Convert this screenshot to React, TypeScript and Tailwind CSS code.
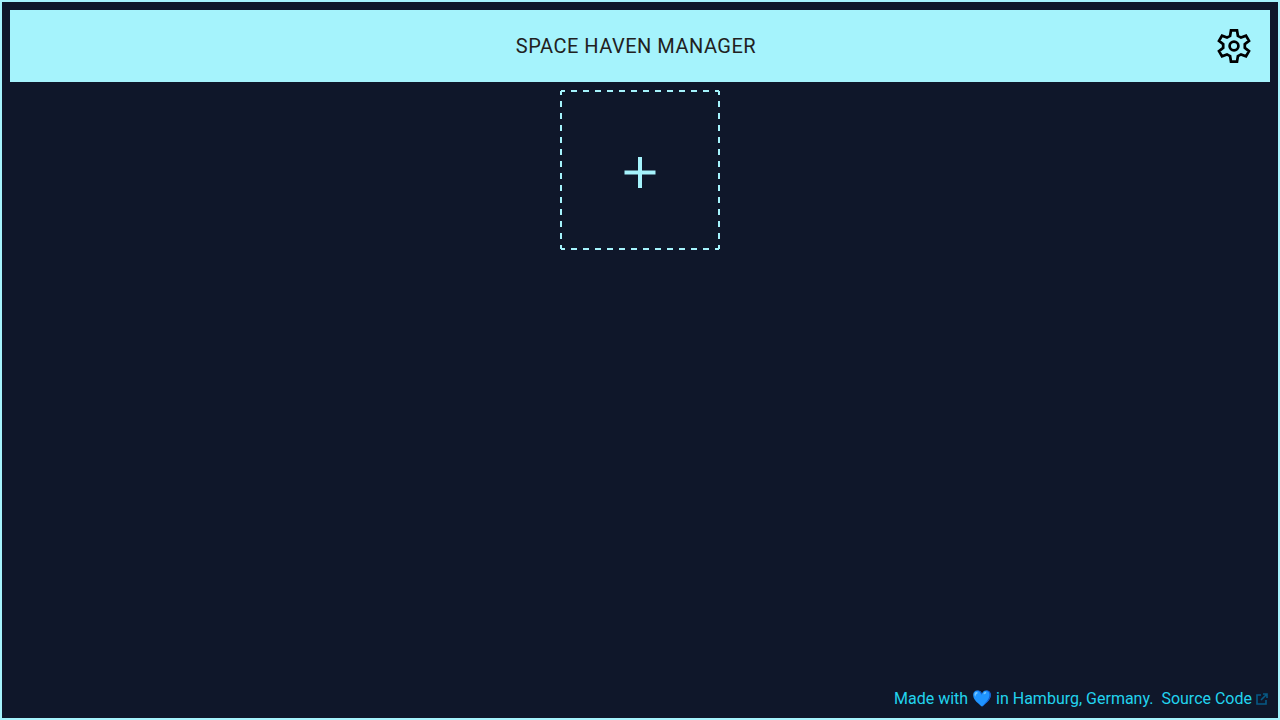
export default function App() {
  return (
    <div className="flex min-h-screen flex-col border-2 border-[#a5f3fc] bg-[#0f172a] p-2 font-[Roboto,sans-serif]">
      <header className="flex items-center bg-[#a5f3fc] p-4">
        <h1 className="flex-1 pl-8 text-center text-xl leading-10 font-normal tracking-wide text-[#212121]">SPACE HAVEN MANAGER</h1>
        <button type="button" aria-label="Settings" className="text-black">
          <svg viewBox="0 0 40 40" className="size-10" fill="none" stroke="currentColor" strokeWidth="2.7">
            <path d="M17 4.4h6l.9 5.4 3.1 1.8 5-1.9 3 5.2-4.2 3.3v3.6l4.2 3.3-3 5.2-5-1.9-3.1 1.8-.9 5.4h-6l-.9-5.4-3.1-1.8-5 1.9-3-5.2 4.2-3.3v-3.6l-4.2-3.3 3-5.2 5 1.9 3.1-1.8z" />
            <circle cx="20" cy="20" r="4.4" />
          </svg>
        </button>
      </header>
      <main className="flex flex-1 items-start justify-center pt-2">
        <button type="button" aria-label="Add" className="relative flex size-40 items-center justify-center pt-1 text-[#a5f3fc]">
          <svg viewBox="0 0 160 160" className="absolute inset-0 size-full" fill="none" stroke="currentColor" strokeWidth="2" aria-hidden="true">
            <path
              d="M1 1h158v158H1z"
              strokeDasharray="4 6 6 6 6 6 6 6 6 6 6 6 6 6 6 6 6 6 6 6 6 6 6 6 6 6 4 0"
            />
          </svg>
          <svg viewBox="0 0 32 32" className="size-8" fill="none" stroke="currentColor" strokeWidth="4" aria-hidden="true">
            <path d="M16 1v31M.5 16.5h31" />
          </svg>
        </button>
      </main>
      <footer className="flex items-center justify-end gap-2 pr-0.5 text-base leading-[22px] text-[#22d3ee]">
        <p>
          Made with <span className="brightness-125">💙</span> in Hamburg, Germany.
        </p>
        <a href="#source" className="flex items-center gap-1">
          Source Code
          <svg viewBox="0 0 12 12" className="size-3 text-[#075985]" fill="none" stroke="currentColor" strokeWidth="1.6" aria-hidden="true">
            <path d="M5 2H1v9h9V7M7 1h4v4M11 1 5 7" />
          </svg>
        </a>
      </footer>
    </div>
  );
}
